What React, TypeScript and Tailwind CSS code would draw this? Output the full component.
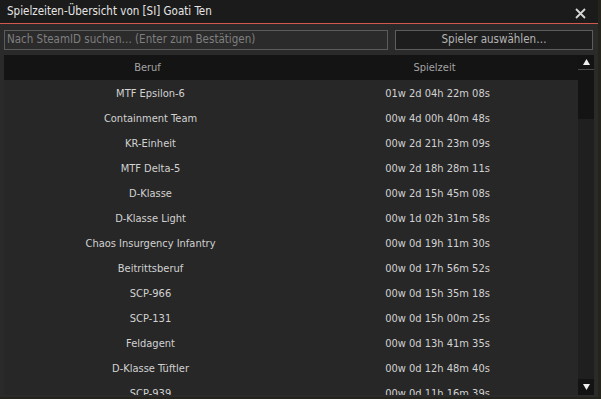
import React from "react";

const rows: [string, string][] = [
  ["MTF Epsilon-6", "01w 2d 04h 22m 08s"],
  ["Containment Team", "00w 4d 00h 40m 48s"],
  ["KR-Einheit", "00w 2d 21h 23m 09s"],
  ["MTF Delta-5", "00w 2d 18h 28m 11s"],
  ["D-Klasse", "00w 2d 15h 45m 08s"],
  ["D-Klasse Light", "00w 1d 02h 31m 58s"],
  ["Chaos Insurgency Infantry", "00w 0d 19h 11m 30s"],
  ["Beitrittsberuf", "00w 0d 17h 56m 52s"],
  ["SCP-966", "00w 0d 15h 35m 18s"],
  ["SCP-131", "00w 0d 15h 00m 25s"],
  ["Feldagent", "00w 0d 13h 41m 35s"],
  ["D-Klasse Tüftler", "00w 0d 12h 48m 40s"],
  ["SCP-939", "00w 0d 11h 16m 39s"],
];

export default function App() {
  return (
    <div
      className="w-[601px] h-[399px] bg-[#24241c] overflow-hidden text-[11px]"
      style={{ fontFamily: "Tahoma, 'DejaVu Sans Condensed', 'Liberation Sans', sans-serif" }}
    >
      <div className="w-[598px] h-[397px] bg-[#2a2a2a] flex flex-col">
        <div className="h-[23px] bg-[#1b1b1b] flex items-center justify-between pl-[7px] pr-[12px] pt-[1px]">
          <span className="text-[#e6e6e6] text-[11.5px]">Spielzeiten-Übersicht von [SI] Goati Ten</span>
          <svg width="11" height="11" viewBox="0 0 11 11" className="mt-[2px]">
            <path d="M1 1 L10 10 M10 1 L1 10" stroke="#d6d6d6" strokeWidth="1.8" />
          </svg>
        </div>
        <div className="h-px bg-[#d05a4e]" />
        <div className="flex gap-[7px] pl-[4px] pr-[5px] mt-[6px]">
          <div className="w-[384px] h-[20px] border border-[#5c5c5c] bg-[#2b2b2b] flex items-center pl-[2px] text-[#7f7f7f] text-[11.5px]">
            Nach SteamID suchen… (Enter zum Bestätigen)
          </div>
          <div className="flex-1 h-[20px] border border-[#5c5c5c] bg-[#1d1d1d] flex items-center justify-center text-[#b4b4b4] text-[11.5px]">
            Spieler auswählen…
          </div>
        </div>
        <div className="flex ml-[4px] mr-[4px] mt-[5px] flex-1 min-h-0 overflow-hidden">
          <div className="flex-1 flex flex-col min-w-0 overflow-hidden">
            <div className="h-[25px] shrink-0 bg-[#141414] flex items-center pt-[2px] text-[#a3a3a3]">
              <div className="flex-1 text-center">Beruf</div>
              <div className="flex-1 text-center">Spielzeit</div>
            </div>
            <div className="flex-1 bg-[#272727] overflow-hidden pt-[2px]">
              {rows.map(([a, b]) => (
                <div key={a} className="h-[25px] flex items-center text-[#d2d2d2]">
                  <div className="flex-1 text-center pl-[6px]">{a}</div>
                  <div className="flex-1 text-center pl-[6px]">{b}</div>
                </div>
              ))}
            </div>
          </div>
          <div className="w-[16px] flex flex-col bg-[#1f1f1f]">
            <div className="h-[15px] bg-[#131313] flex items-center justify-center border-b border-[#4a4a4a]">
              <svg width="7" height="6" viewBox="0 0 7 6">
                <path d="M3.5 0 L7 6 L0 6 Z" fill="#f0f0f0" />
              </svg>
            </div>
            <div className="h-[49px] bg-[#141414]" />
            <div className="flex-1" />
            <div className="h-[16px] bg-[#131313] flex items-center justify-center">
              <svg width="7" height="6" viewBox="0 0 7 6">
                <path d="M0 0 L7 0 L3.5 6 Z" fill="#f0f0f0" />
              </svg>
            </div>
          </div>
        </div>
        <div className="h-[2px]" />
      </div>
    </div>
  );
}
